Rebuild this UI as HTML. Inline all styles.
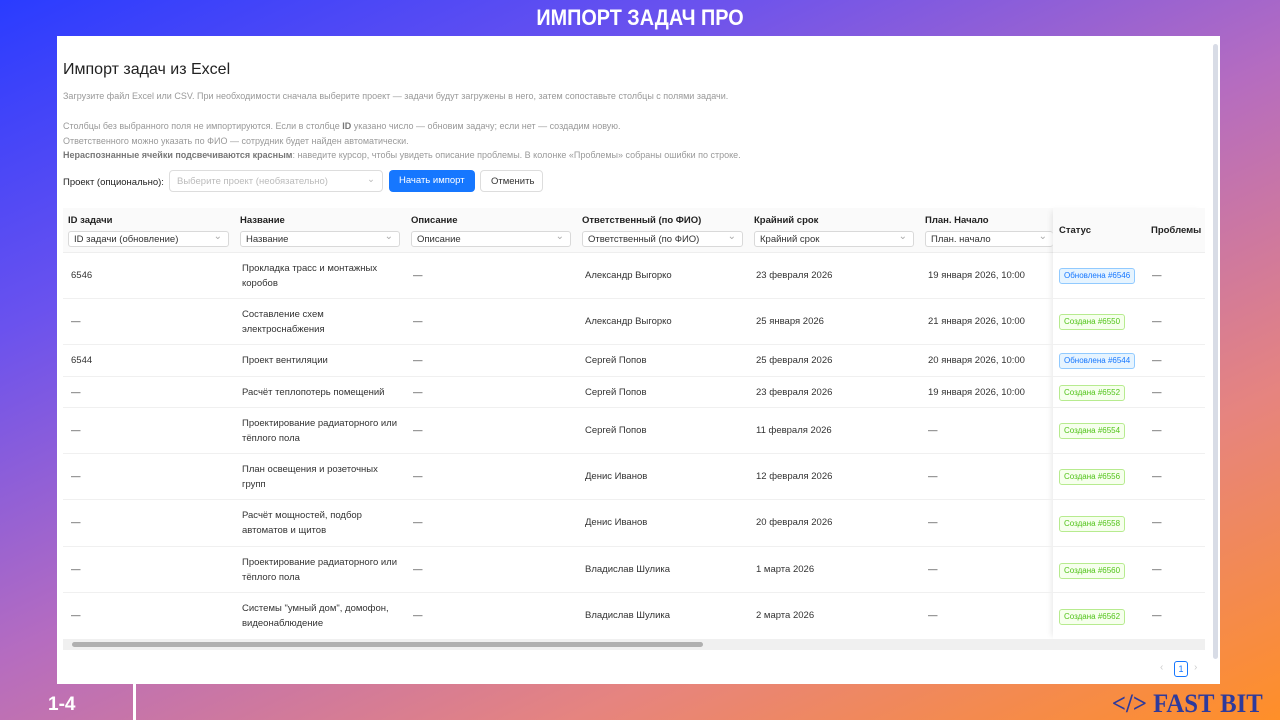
<!DOCTYPE html>
<html><head><meta charset="utf-8"><style>
*{margin:0;padding:0;box-sizing:border-box}
body{width:1280px;height:720px;overflow:hidden;position:relative;font-family:"Liberation Sans","DejaVu Sans",sans-serif;
background:linear-gradient(155deg,#2a3cff 0%,#6a52ee 25%,#b56cc0 50%,#e6847f 75%,#ff8f28 100%)}
.title{position:absolute;top:5px;left:0;width:1280px;text-align:center;color:#fff;font-weight:bold;font-size:22px;transform:scaleX(.9)}
.panel{position:absolute;left:57px;top:36px;width:1163px;height:648px;background:#fff}
.vs{position:absolute;left:1213px;top:44px;width:5px;height:615px;background:#d8dce6;border-radius:3px}
.h1{position:absolute;left:63px;top:61px;font-size:16px;color:#222}
.p{position:absolute;left:63px;font-size:9px;color:#999}
.p b{color:#777}
.lbl{position:absolute;left:63px;top:177px;font-size:9.5px;color:#222}
.sel{position:absolute;left:169px;top:170px;width:214px;height:22px;border:1px solid #ddd;border-radius:4px;font-size:9.5px;color:#bbb;padding:5px 7px}
.btn{position:absolute;top:170px;height:22px;border-radius:4px;font-size:9.5px;padding:5px 10px}
.hd{position:absolute;top:208px;left:63px;width:1142px;height:45px;background:#fafafa;border-bottom:1px solid #eee}
.hc{position:absolute;font-size:9.5px;font-weight:bold;color:#222}
.hs{position:absolute;top:231px;height:16px;border:1px solid #d9d9d9;border-radius:3px;background:#fff;font-size:9.5px;color:#333;padding:2px 5px}
.hs:after{content:"⌄";position:absolute;right:6px;top:-1px;color:#aaa;font-size:10px}
.row{position:absolute;left:63px;width:1142px;border-bottom:1px solid #f0f0f0}
.c{position:absolute;font-size:9.5px;color:#333;line-height:15px}
.tag{position:absolute;font-size:8px;border-radius:3px;padding:1px 4px;line-height:12px}
.bl{color:#1677ff;background:#e6f4ff;border:1px solid #91caff}
.gr{color:#52c41a;background:#f6ffed;border:1px solid #b7eb8f}
.fix{position:absolute;left:1053px;top:208px;width:152px;height:431px;box-shadow:-4px 0 6px -3px rgba(0,0,0,.1)}
</style></head><body>
<div class="title">ИМПОРТ ЗАДАЧ ПРО</div>
<div class="panel"></div>
<div class="vs"></div>
<div class="h1">Импорт задач из Excel</div>
<div class="p" style="top:91px">Загрузите файл Excel или CSV. При необходимости сначала выберите проект — задачи будут загружены в него, затем сопоставьте столбцы с полями задачи.</div>
<div class="p" style="top:121px">Столбцы без выбранного поля не импортируются. Если в столбце <b>ID</b> указано число — обновим задачу; если нет — создадим новую.</div>
<div class="p" style="top:136px">Ответственного можно указать по ФИО — сотрудник будет найден автоматически.</div>
<div class="p" style="top:150px"><b>Нераспознанные ячейки подсвечиваются красным</b>: наведите курсор, чтобы увидеть описание проблемы. В колонке «Проблемы» собраны ошибки по строке.</div>
<div class="lbl">Проект (опционально):</div>
<div class="sel">Выберите проект (необязательно)<span style="position:absolute;right:7px;top:3px;color:#bbb">⌄</span></div>
<div class="btn" style="left:389px;width:86px;background:#1677ff;color:#fff">Начать импорт</div>
<div class="btn" style="left:480px;width:63px;border:1px solid #ddd;color:#333">Отменить</div>

<div class="hd"></div>
<div class="hc" style="left:68px;top:215px">ID задачи</div>
<div class="hc" style="left:240px;top:215px">Название</div>
<div class="hc" style="left:411px;top:215px">Описание</div>
<div class="hc" style="left:582px;top:215px">Ответственный (по ФИО)</div>
<div class="hc" style="left:754px;top:215px">Крайний срок</div>
<div class="hc" style="left:925px;top:215px">План. Начало</div>
<div class="hc" style="left:1059px;top:225px">Статус</div>
<div class="hc" style="left:1151px;top:225px">Проблемы</div>
<div class="hs" style="left:68px;width:161px">ID задачи (обновление)</div>
<div class="hs" style="left:240px;width:160px">Название</div>
<div class="hs" style="left:411px;width:160px">Описание</div>
<div class="hs" style="left:582px;width:161px">Ответственный (по ФИО)</div>
<div class="hs" style="left:754px;width:160px">Крайний срок</div>
<div class="hs" style="left:925px;width:128px;border-right:none">План. начало</div>
<div class="fix"></div>

<div class="row" style="top:253px;height:46px"><div class="c" style="left:8px;top:15px">6546</div><div class="c" style="left:179px;top:8px">Прокладка трасс и монтажных<br>коробов</div><div class="c" style="left:350px;top:15px">—</div><div class="c" style="left:522px;top:15px">Александр Выгорко</div><div class="c" style="left:693px;top:15px">23 февраля 2026</div><div class="c" style="left:865px;top:15px">19 января 2026, 10:00</div><div class="tag bl" style="left:996px;top:15px">Обновлена #6546</div><div class="c" style="left:1089px;top:15px">—</div></div>
<div class="row" style="top:299px;height:46px"><div class="c" style="left:8px;top:15px">—</div><div class="c" style="left:179px;top:8px">Составление схем<br>электроснабжения</div><div class="c" style="left:350px;top:15px">—</div><div class="c" style="left:522px;top:15px">Александр Выгорко</div><div class="c" style="left:693px;top:15px">25 января 2026</div><div class="c" style="left:865px;top:15px">21 января 2026, 10:00</div><div class="tag gr" style="left:996px;top:15px">Создана #6550</div><div class="c" style="left:1089px;top:15px">—</div></div>
<div class="row" style="top:345px;height:32px"><div class="c" style="left:8px;top:8px">6544</div><div class="c" style="left:179px;top:8px">Проект вентиляции</div><div class="c" style="left:350px;top:8px">—</div><div class="c" style="left:522px;top:8px">Сергей Попов</div><div class="c" style="left:693px;top:8px">25 февраля 2026</div><div class="c" style="left:865px;top:8px">20 января 2026, 10:00</div><div class="tag bl" style="left:996px;top:8px">Обновлена #6544</div><div class="c" style="left:1089px;top:8px">—</div></div>
<div class="row" style="top:377px;height:31px"><div class="c" style="left:8px;top:8px">—</div><div class="c" style="left:179px;top:8px">Расчёт теплопотерь помещений</div><div class="c" style="left:350px;top:8px">—</div><div class="c" style="left:522px;top:8px">Сергей Попов</div><div class="c" style="left:693px;top:8px">23 февраля 2026</div><div class="c" style="left:865px;top:8px">19 января 2026, 10:00</div><div class="tag gr" style="left:996px;top:8px">Создана #6552</div><div class="c" style="left:1089px;top:8px">—</div></div>
<div class="row" style="top:408px;height:46px"><div class="c" style="left:8px;top:15px">—</div><div class="c" style="left:179px;top:8px">Проектирование радиаторного или<br>тёплого пола</div><div class="c" style="left:350px;top:15px">—</div><div class="c" style="left:522px;top:15px">Сергей Попов</div><div class="c" style="left:693px;top:15px">11 февраля 2026</div><div class="c" style="left:865px;top:15px">—</div><div class="tag gr" style="left:996px;top:15px">Создана #6554</div><div class="c" style="left:1089px;top:15px">—</div></div>
<div class="row" style="top:454px;height:46px"><div class="c" style="left:8px;top:15px">—</div><div class="c" style="left:179px;top:8px">План освещения и розеточных<br>групп</div><div class="c" style="left:350px;top:15px">—</div><div class="c" style="left:522px;top:15px">Денис Иванов</div><div class="c" style="left:693px;top:15px">12 февраля 2026</div><div class="c" style="left:865px;top:15px">—</div><div class="tag gr" style="left:996px;top:15px">Создана #6556</div><div class="c" style="left:1089px;top:15px">—</div></div>
<div class="row" style="top:500px;height:47px"><div class="c" style="left:8px;top:15px">—</div><div class="c" style="left:179px;top:8px">Расчёт мощностей, подбор<br>автоматов и щитов</div><div class="c" style="left:350px;top:15px">—</div><div class="c" style="left:522px;top:15px">Денис Иванов</div><div class="c" style="left:693px;top:15px">20 февраля 2026</div><div class="c" style="left:865px;top:15px">—</div><div class="tag gr" style="left:996px;top:16px">Создана #6558</div><div class="c" style="left:1089px;top:15px">—</div></div>
<div class="row" style="top:547px;height:46px"><div class="c" style="left:8px;top:15px">—</div><div class="c" style="left:179px;top:8px">Проектирование радиаторного или<br>тёплого пола</div><div class="c" style="left:350px;top:15px">—</div><div class="c" style="left:522px;top:15px">Владислав Шулика</div><div class="c" style="left:693px;top:15px">1 марта 2026</div><div class="c" style="left:865px;top:15px">—</div><div class="tag gr" style="left:996px;top:16px">Создана #6560</div><div class="c" style="left:1089px;top:15px">—</div></div>
<div class="row" style="top:593px;height:46px;border:none"><div class="c" style="left:8px;top:15px">—</div><div class="c" style="left:179px;top:8px">Системы "умный дом", домофон,<br>видеонаблюдение</div><div class="c" style="left:350px;top:15px">—</div><div class="c" style="left:522px;top:15px">Владислав Шулика</div><div class="c" style="left:693px;top:15px">2 марта 2026</div><div class="c" style="left:865px;top:15px">—</div><div class="tag gr" style="left:996px;top:16px">Создана #6562</div><div class="c" style="left:1089px;top:15px">—</div></div>

<div style="position:absolute;left:63px;top:639px;width:1142px;height:11px;background:#f0f0f0"></div>
<div style="position:absolute;left:72px;top:642px;width:631px;height:5px;background:#b0b0b0;border-radius:3px"></div>
<div style="position:absolute;left:1160px;top:662px;font-size:10px;color:#ccc">‹</div>
<div style="position:absolute;left:1174px;top:661px;width:14px;height:16px;border:1px solid #1677ff;border-radius:3px;font-size:9px;color:#1677ff;text-align:center;line-height:14px">1</div>
<div style="position:absolute;left:1194px;top:662px;font-size:10px;color:#ccc">›</div>

<div style="position:absolute;left:133px;top:684px;width:3px;height:36px;background:#fff"></div>
<div style="position:absolute;left:48px;top:694px;color:#fff;font-weight:bold;font-size:19px">1-4</div>
<div style="position:absolute;right:17px;top:689px;color:#2e3a9c;font-family:'Liberation Serif',serif;font-weight:bold;font-size:26px;transform:scaleX(.95);transform-origin:right">&lt;/&gt; FAST BIT</div>
</body></html>
